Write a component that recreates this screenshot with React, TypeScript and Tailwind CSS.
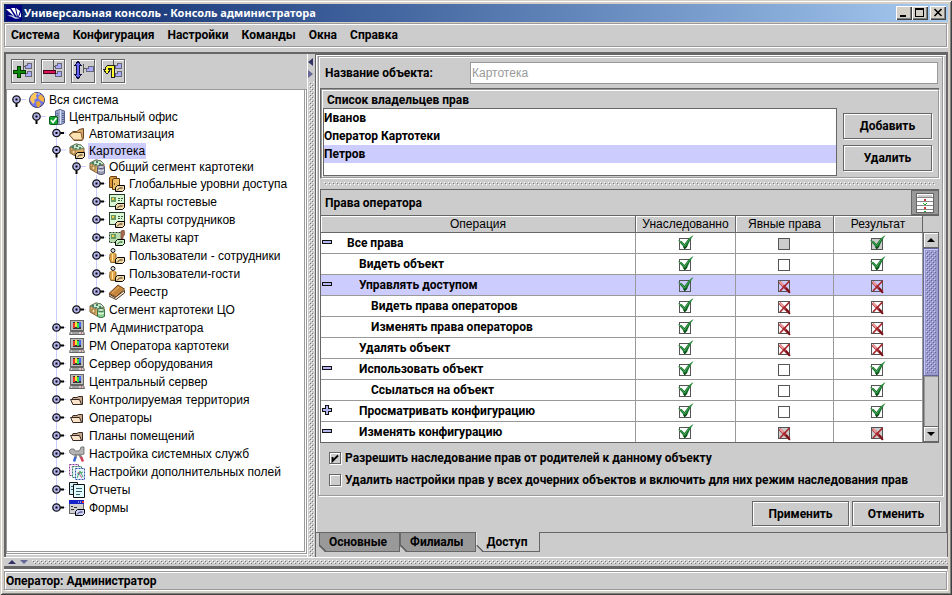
import { useId, useState, type ReactNode } from "react";

const etched = "border border-[#999] shadow-[inset_1px_1px_0_#fff,1px_1px_0_#fff]";
const raised = "border border-[#666] shadow-[inset_1px_1px_0_#fff,1px_1px_0_#fff] bg-[#ccc]";

type IconName =
  | "globe" | "office" | "folder" | "catalog" | "segment" | "levels" | "card"
  | "template" | "user" | "book" | "segmentGreen" | "computer" | "smallFolder"
  | "tools" | "fields" | "reports" | "forms";

type Handle = "open" | "closed";

const tree: { level: number; icon: IconName; label: string; handle: Handle; height: string; last?: boolean; selected?: boolean }[] = [
  { level: 0, icon: "globe", label: "Вся система", handle: "open", height: "h-[18px]" },
  { level: 1, icon: "office", label: "Центральный офис", handle: "open", height: "h-4" },
  { level: 2, icon: "folder", label: "Автоматизация", handle: "closed", height: "h-[17px]" },
  { level: 2, icon: "catalog", label: "Картотека", handle: "open", height: "h-[17px]", selected: true },
  { level: 3, icon: "segment", label: "Общий сегмент картотеки", handle: "open", height: "h-4" },
  { level: 4, icon: "levels", label: "Глобальные уровни доступа", handle: "closed", height: "h-[18px]" },
  { level: 4, icon: "card", label: "Карты гостевые", handle: "closed", height: "h-[18px]" },
  { level: 4, icon: "card", label: "Карты сотрудников", handle: "closed", height: "h-[18px]" },
  { level: 4, icon: "template", label: "Макеты карт", handle: "closed", height: "h-[18px]" },
  { level: 4, icon: "user", label: "Пользователи - сотрудники", handle: "closed", height: "h-[18px]" },
  { level: 4, icon: "user", label: "Пользователи-гости", handle: "closed", height: "h-[18px]" },
  { level: 4, icon: "book", label: "Реестр", handle: "closed", height: "h-[18px]", last: true },
  { level: 3, icon: "segmentGreen", label: "Сегмент картотеки ЦО", handle: "closed", height: "h-[18px]", last: true },
  { level: 2, icon: "computer", label: "РМ Администратора", handle: "closed", height: "h-[18px]" },
  { level: 2, icon: "computer", label: "РМ Оператора картотеки", handle: "closed", height: "h-[18px]" },
  { level: 2, icon: "computer", label: "Сервер оборудования", handle: "closed", height: "h-[18px]" },
  { level: 2, icon: "computer", label: "Центральный сервер", handle: "closed", height: "h-[18px]" },
  { level: 2, icon: "smallFolder", label: "Контролируемая территория", handle: "closed", height: "h-[18px]" },
  { level: 2, icon: "smallFolder", label: "Операторы", handle: "closed", height: "h-[18px]" },
  { level: 2, icon: "smallFolder", label: "Планы помещений", handle: "closed", height: "h-[18px]" },
  { level: 2, icon: "tools", label: "Настройка системных служб", handle: "closed", height: "h-[18px]" },
  { level: 2, icon: "fields", label: "Настройки дополнительных полей", handle: "closed", height: "h-[18px]" },
  { level: 2, icon: "reports", label: "Отчеты", handle: "closed", height: "h-[18px]" },
  { level: 2, icon: "forms", label: "Формы", handle: "closed", height: "h-[18px]", last: true },
];

type Mark = "yes" | "yesGrey" | "no" | "noGrey" | "empty" | "grey";

const rights: { label: string; indent: string; toggle?: "minus" | "plus"; marks: [Mark, Mark, Mark]; selected?: boolean }[] = [
  { label: "Все права", indent: "pl-[26px]", toggle: "minus", marks: ["yes", "grey", "yesGrey"] },
  { label: "Видеть объект", indent: "pl-[38px]", marks: ["yes", "empty", "yes"] },
  { label: "Управлять доступом", indent: "pl-[38px]", toggle: "minus", marks: ["yes", "no", "no"], selected: true },
  { label: "Видеть права операторов", indent: "pl-[50px]", marks: ["yes", "no", "no"] },
  { label: "Изменять права операторов", indent: "pl-[50px]", marks: ["yes", "no", "no"] },
  { label: "Удалять объект", indent: "pl-[38px]", marks: ["yes", "no", "no"] },
  { label: "Использовать объект", indent: "pl-[38px]", toggle: "minus", marks: ["yes", "empty", "yes"] },
  { label: "Ссылаться на объект", indent: "pl-[50px]", marks: ["yes", "empty", "yes"] },
  { label: "Просматривать конфигурацию", indent: "pl-[38px]", toggle: "plus", marks: ["yes", "empty", "yes"] },
  { label: "Изменять конфигурацию", indent: "pl-[38px]", toggle: "minus", marks: ["yes", "noGrey", "noGrey"] },
];

const columns = ["Унаследованно", "Явные права", "Результат"];

function Bumps({ light = "#fff", dark = "#777" }: { light?: string; dark?: string }) {
  const id = useId();
  return (
    <svg className="block h-full w-full" shapeRendering="crispEdges" aria-hidden="true">
      <pattern id={id} width="4" height="4" patternUnits="userSpaceOnUse">
        <rect x="0" y="0" width="1" height="1" fill={light} />
        <rect x="1" y="1" width="1" height="1" fill={dark} />
        <rect x="2" y="2" width="1" height="1" fill={light} />
        <rect x="3" y="3" width="1" height="1" fill={dark} />
      </pattern>
      <rect width="100%" height="100%" fill={`url(#${id})`} />
    </svg>
  );
}

// Small folder laid over the lower right corner of many icons
function CornerFolder({ fill = "#f5d9a4" }: { fill?: string }) {
  return (
    <>
      <path d="M6.5 15.5V11.5L8.5 9.5H15.5V13.5L13.5 15.5Z" fill={fill} stroke="#000" />
      <path d="M8 14.5L10.5 12H13.5" fill="none" stroke="#000" strokeWidth=".8" />
    </>
  );
}

const openFolder = (
  <>
    <path d="M.5 8.5L4 5.5H8L10 3.5L14.5 2.5V12.5L13 14.5H5Z" fill="#d9a86c" stroke="#6b4420" />
    <path d="M.5 9L4 6.5H12L13.5 14H5Z" fill="#fde2b4" stroke="#8a6030" />
  </>
);

const cabinet = (
  <>
    <path d="M1 4L7 1L12 2L15 5V11L8 14L1 10Z" fill="#dcae63" stroke="#83613a" />
    <path d="M1 4L7 1L12 2L15 5L8 7Z" fill="#cde8c8" stroke="#667f66" />
    <path d="M3 3H5V5H3ZM7 2H9V4H7ZM10 4H12V6H10ZM6 5H8V6H6Z" fill="#497f68" />
    <path d="M3 7H6V11H3Z" fill="#f9dda4" stroke="#96713c" />
  </>
);

const icons: Record<IconName, ReactNode> = {
  globe: (
    <>
      <circle cx="8" cy="8" r="7.5" fill="#6f76ee" stroke="#444477" />
      <path d="M2 4L5 1H8L7 4L8 6L5 8L6 10L4 12L1 8Z" fill="#ffc85a" />
      <path d="M10 4L12 2.5L15 6L15 10L12 9L10 7L9 6Z" fill="#f5b33d" />
      <path d="M7 10L10 9L12 12L10 15L8 15Z" fill="#e9a732" />
      <path d="M8 1.5L11 1.5L10 3Z" fill="#dceaff" />
    </>
  ),
  office: (
    <>
      <path d="M6.5 2L11 .5L15.5 2V14L12 15.5H6.5Z" fill="#9aa3cc" stroke="#56608c" />
      <path d="M11.5 1V15" stroke="#dde3ff" />
      <path d="M8.5 4V13M14 4V13" stroke="#59648f" strokeDasharray="1 1" strokeWidth="2" />
      <rect x=".5" y="7.5" width="8" height="8" rx="1" fill="#17a535" stroke="#075b18" />
      <path d="M2 11L4 13.5L7.5 9" fill="none" stroke="#fff" strokeWidth="1.6" />
    </>
  ),
  folder: openFolder,
  catalog: (
    <>
      {cabinet}
      <CornerFolder />
    </>
  ),
  segment: (
    <>
      {cabinet}
      <path d="M8.5 8V14.5Q12 17 15.5 14.5V8Z" fill="#9b9db5" stroke="#555870" />
      <ellipse cx="12" cy="8" rx="3.5" ry="1.5" fill="#d4d5e5" stroke="#555870" />
      <path d="M9 11Q12 13 15 11" fill="none" stroke="#eee" />
    </>
  ),
  segmentGreen: (
    <>
      {cabinet}
      <path d="M8.5 8V14.5Q12 17 15.5 14.5V8Z" fill="#8fd197" stroke="#397044" />
      <ellipse cx="12" cy="8" rx="3.5" ry="1.5" fill="#d4f0d6" stroke="#397044" />
      <path d="M9 11Q12 13 15 11" fill="none" stroke="#efffed" />
    </>
  ),
  levels: (
    <>
      <path d="M.5 1.5L2 .5H7.5V11.5H.5Z" fill="#d99738" stroke="#68400e" />
      <path d="M3.5 3.5L5 2.5H10.5V13.5H3.5Z" fill="#efbf68" stroke="#5a390e" />
      <path d="M5 8H6" stroke="#000" />
      <CornerFolder />
    </>
  ),
  card: (
    <>
      <rect x=".5" y=".5" width="15" height="12" fill="#d9f7d4" stroke="#263b26" />
      <rect x="2" y="3" width="5" height="5" fill="#6a9960" />
      <rect x="3" y="4" width="2" height="2" fill="#ffd24d" />
      <path d="M9 4.5H14M9 6.5H13" stroke="#395e39" strokeDasharray="2 1" />
      <CornerFolder />
    </>
  ),
  template: (
    <>
      <rect x=".5" y="2.5" width="13" height="10" fill="#b9dcae" stroke="#263b26" strokeDasharray="2 1" />
      <rect x="2" y="4" width="5" height="5" fill="#6a9960" />
      <rect x="3" y="5" width="2" height="2" fill="#ffd24d" />
      <path d="M12 1L15 0L16 4L14 7V10H12V6Z" fill="#a86b53" stroke="#6a3b2a" strokeWidth=".6" />
      <CornerFolder fill="#c9f5c3" />
    </>
  ),
  user: (
    <>
      <circle cx="4" cy="2.5" r="2" fill="#ddd" stroke="#111" />
      <path d="M1 5H7V14.5H1Z" fill="#dfa64c" />
      <path d="M1 6L.5 11L2 14.5H6L7 11V6" fill="none" stroke="#8e6528" />
      <path d="M3.5 6V13" stroke="#ffe0a0" />
      <CornerFolder />
    </>
  ),
  book: (
    <>
      <path d="M0 10L6 13.5L15.5 6.5V9L7 15.5L0 12Z" fill="#f5eee0" stroke="#4c361f" />
      <path d="M0 9.5L9 1L15.5 5L7 13Z" fill="#c5853c" stroke="#6c431b" />
      <path d="M3 9L10 3" stroke="#e9b36a" />
    </>
  ),
  computer: (
    <>
      <rect x="1.5" y=".5" width="13" height="10" fill="#bbb" stroke="#666" />
      <rect x="4" y="2" width="8" height="7" fill="#333" />
      <path d="M4 3H6V8H4Z" fill="#e33" />
      <path d="M6 2H8V7H6Z" fill="#fd3" />
      <path d="M8 3H10V8H8Z" fill="#3d5" />
      <path d="M10 2H12V7H10Z" fill="#46f" />
      <path d="M1.5 11.5H14.5L15.5 14.5H.5Z" fill="#ccc" stroke="#666" />
      <path d="M3 13H10" stroke="#777" />
      <path d="M12 13H13" stroke="#c22" />
    </>
  ),
  smallFolder: (
    <>
      <path d="M2.5 8L4 5.5H8L9.5 4.5H13.5V12.5H4Z" fill="#c7a98c" stroke="#382a22" />
      <path d="M1.5 7.5H10.5L12.5 12.5H4Z" fill="#fbe4ca" stroke="#382a22" />
    </>
  ),
  tools: (
    <>
      <path d="M0 5L2 3H5L6 5H9L11 4L12 1H15V8L12 9H4L1 7Z" fill="#b4b4b4" stroke="#666" strokeWidth=".8" />
      <path d="M7 8L6.5 12M10 8L12.5 12" stroke="#888" strokeWidth="2.4" />
      <path d="M6.5 11L5 15.5" stroke="#3565d4" strokeWidth="2.4" />
      <path d="M12 11L14 15.5" stroke="#d43a50" strokeWidth="2.4" />
    </>
  ),
  fields: (
    <>
      <path d="M.5 .5H9.5V11.5H.5Z" fill="#f6e8f8" stroke="#8a3f92" strokeDasharray="2 1" />
      <path d="M3.5 2.5H12.5V13.5H3.5Z" fill="#e5f4ef" stroke="#307868" strokeDasharray="2 1" />
      <path d="M6.5 4.5H15.5V15.5H6.5Z" fill="#eaf5ff" stroke="#3454b0" strokeDasharray="2 1" />
      <path d="M8 14L11 7L14 13M8 10L14 8" fill="none" stroke="#43a866" />
      <path d="M9 8L13 14" stroke="#cf589e" />
    </>
  ),
  reports: (
    <>
      <path d="M.5 .5H8.5V12.5H.5Z" fill="#d7f3f8" stroke="#111" />
      <path d="M4.5 2.5H15.5V15.5H4.5Z" fill="#e2fbff" stroke="#111" />
      <path d="M7 6.5H13M7 9.5H13M7 12.5H11" stroke="#345f68" />
      <path d="M2 4.5H4M2 7.5H4" stroke="#345f68" />
    </>
  ),
  forms: (
    <>
      <rect x=".5" y=".5" width="14" height="13" fill="#d0d0d0" stroke="#666" />
      <rect x="0" y="0" width="15" height="4" fill="#1822c9" />
      <path d="M9 2H10M11 2H12" stroke="#fff" />
      <path d="M13 1H15V3H13Z" fill="#ee3b2b" />
      <path d="M2 6.5H4M5 7.5H8M2 9.5H5" stroke="#333" />
      <CornerFolder fill="#cfd1ff" />
    </>
  ),
};

function TreeHandle({ handle, level, last }: { handle: Handle; level: number; last?: boolean }) {
  return (
    <svg className="h-full w-5 shrink-0 overflow-visible" aria-hidden="true">
      {level > 1 && <line x1="9.5" x2="9.5" y1="0" y2={last ? "50%" : "100%"} stroke="#ccf" />}
      <svg x="5" y="50%" overflow="visible">
        <path d="M9 -.5H14" stroke="#ccf" />
        {handle === "open" ? (
          <path d="M4.5 3V7" stroke="#000" strokeWidth="2" />
        ) : (
          <path d="M8 -.5H12" stroke="#000" strokeWidth="2" />
        )}
        <circle cx="4.5" cy="-.5" r="3.7" fill="#b4b4ee" stroke="#111" strokeWidth="1.3" />
        <rect x="3.5" y="-1.5" width="2" height="2" fill="#000" />
      </svg>
    </svg>
  );
}

function Tree() {
  return (
    <ul role="tree" className="text-[12px] leading-4">
      {tree.map(({ level, icon, label, handle, height, last, selected }) => (
        <li key={label} role="treeitem" aria-level={level + 1} aria-selected={!!selected} className={`flex items-center ${height}`}>
          {Array.from({ length: level }, (_, i) => (
            <svg key={i} className="h-full w-5 shrink-0" aria-hidden="true">
              {i > 1 && <line x1="9.5" x2="9.5" y1="0" y2="100%" stroke="#ccf" />}
            </svg>
          ))}
          <TreeHandle handle={handle} level={level} last={last} />
          <svg viewBox="0 0 16 16" className="mr-[3px] ml-0.5 size-4 shrink-0" aria-hidden="true">
            {icons[icon]}
          </svg>
          <span className={selected ? "bg-[#ccf] px-px" : "px-px"}>{label}</span>
        </li>
      ))}
    </ul>
  );
}

function TreeToolbar() {
  const branch = (
    <>
      <path d="M11.5 0V14M11.5 6.5H14M11.5 13.5H14" fill="none" stroke="#555" />
      <path d="M13.5 5.5H15.5V3.5H19.5V8.5H13.5Z" fill="#aaf" stroke="#667" />
      <path d="M13.5 13.5H15.5V11.5H19.5V16.5H13.5Z" fill="#aaf" stroke="#667" />
    </>
  );
  const buttons: { label: string; drawing: ReactNode }[] = [
    {
      label: "Добавить",
      drawing: (
        <>
          {branch}
          <path d="M5.5 6.5H8.5V10.5H13.5V13.5H8.5V17.5H5.5V13.5H1.5V10.5H5.5Z" fill="#0a8a0a" stroke="#003c00" />
        </>
      ),
    },
    {
      label: "Удалить",
      drawing: (
        <>
          {branch}
          <path d="M1.5 10.5H13.5V13.5H1.5Z" fill="#e0105c" stroke="#400018" />
        </>
      ),
    },
    {
      label: "Переместить",
      drawing: (
        <>
          <path d="M6 1.5L9.5 5.5H7.5V14.5H9.5L6 18.5L2.5 14.5H4.5V5.5H2.5Z" fill="#66f" stroke="#114" />
          <path d="M11.5 4V13M11.5 8.5H14" fill="none" stroke="#555" />
          <path d="M14.5 8.5H16.5V6.5H21.5V11.5H14.5Z" fill="#aaf" stroke="#667" />
        </>
      ),
    },
    {
      label: "Вернуть",
      drawing: (
        <>
          {branch}
          <path d="M10.5 18V6.5H6.5L5 8.5V11" fill="none" stroke="#222" strokeWidth="4" />
          <path d="M1.5 9.5H8.5L5 14Z" fill="#ff3" stroke="#222" />
          <path d="M10.5 17V6.5H6.5L5 8.5V11" fill="none" stroke="#ff3" strokeWidth="2" />
        </>
      ),
    },
  ];
  return (
    <div className="flex h-[35px] gap-1.5 px-[5px] py-[5px]">
      {buttons.map(({ label, drawing }) => (
        <button key={label} type="button" aria-label={label} className={`size-6 ${raised}`}>
          <svg viewBox="0 0 22 22" className="block size-[22px]" shapeRendering="crispEdges">{drawing}</svg>
        </button>
      ))}
    </div>
  );
}

function MarkBox({ mark, label }: { mark: Mark; label: string }) {
  const checked = mark === "yes" || mark === "yesGrey";
  const denied = mark === "no" || mark === "noGrey";
  const grey = mark === "grey" || mark === "yesGrey" || mark === "noGrey";
  return (
    <span className="mx-auto grid size-4">
      <input type="checkbox" aria-label={label} defaultChecked={checked} className="col-start-1 row-start-1 size-4 appearance-none" />
      <svg viewBox="0 0 16 16" className="pointer-events-none col-start-1 row-start-1 size-4 overflow-visible" aria-hidden="true">
        <rect x="1.5" y="3.5" width="11" height="11" fill={grey ? "#ccc" : "none"} stroke="#555" shapeRendering="crispEdges" />
        {checked && (
          <>
            <path d="M0 5.5L3.5 6L6.5 9L10.5 3.5L15.5 0L12 5.5L9 12L6.5 14.5L4.5 10.5Z" fill="#14702a" />
            <path d="M1 6.3L3.5 7L6.5 11L11 4.5L14 1.5" fill="none" stroke="#4fae5c" strokeWidth=".9" />
            <path d="M5.8 12L6.8 13.6L9 11" fill="none" stroke="#0a3c12" />
          </>
        )}
        {denied && (
          <>
            <path d="M2.5 5L12.5 15" stroke="#a83038" strokeWidth="2.6" />
            <path d="M12.5 4L3 14" stroke="#a8272c" strokeWidth="1.8" />
            <path d="M3 5L6.5 8.5" stroke="#ef9c9c" strokeWidth="2" />
            <path d="M9 11L13 16" stroke="#6e1015" strokeWidth="1.4" />
          </>
        )}
      </svg>
    </span>
  );
}

function Toggle({ kind }: { kind: "minus" | "plus" }) {
  return (
    <button type="button" aria-label={kind === "minus" ? "Свернуть" : "Развернуть"} className="absolute top-0.5 left-px size-[10px]">
      <svg viewBox="0 0 10 10" className="block size-[10px]" shapeRendering="crispEdges">
        {kind === "minus" ? (
          <path d="M.5 3.5H9.5V6.5H.5Z" fill="#b4b4ee" stroke="#111" />
        ) : (
          <path d="M3.5 .5H6.5V3.5H9.5V6.5H6.5V9.5H3.5V6.5H.5V3.5H3.5Z" fill="#b4b4ee" stroke="#111" />
        )}
      </svg>
    </button>
  );
}

function RightsTable() {
  return (
    <div className="flex min-h-0 flex-1 border-t border-b border-l border-[#666]">
      <div className="min-w-0 flex-1 overflow-hidden bg-white">
        <table className="w-full table-fixed border-separate border-spacing-0">
          <thead>
            <tr className="h-[17px] bg-[#ccc] font-['Liberation_Sans'] text-[12px] leading-4 font-normal">
              <th className="border-r border-b border-[#666] p-0 font-normal shadow-[inset_1px_1px_0_#fff]">Операция</th>
              {columns.map((column, i) => (
                <th
                  key={column}
                  className={`border-r border-b border-[#666] p-0 font-normal shadow-[inset_1px_1px_0_#fff] ${["w-[100px]", "w-[98px]", "w-[89px]"][i]}`}
                >
                  {column}
                </th>
              ))}
            </tr>
          </thead>
          <tbody>
            {rights.map(({ label, indent, toggle, marks, selected }) => (
              <tr key={label} className={`h-[21px] ${selected ? "bg-[#ccf]" : ""}`}>
                <td className="border-r border-b border-[#999] p-0">
                  <div className={`relative leading-4 ${indent}`}>
                    {toggle && <Toggle kind={toggle} />}
                    {label}
                  </div>
                </td>
                {marks.map((mark, i) => (
                  <td key={columns[i]} className="border-r border-b border-[#999] p-0">
                    <MarkBox mark={mark} label={`${label}: ${columns[i]}`} />
                  </td>
                ))}
              </tr>
            ))}
          </tbody>
        </table>
      </div>
      <div className="flex w-4 flex-col pt-4">
        <button type="button" aria-label="Вверх" className="flex h-4 shrink-0 items-center justify-center border border-[#666] shadow-[inset_1px_1px_0_#fff]">
          <svg viewBox="0 0 8 4" className="h-1 w-2"><path d="M4 0L8 4H0Z" /></svg>
        </button>
        <div className="h-32 border border-[#669] bg-[#99c] p-0.5 shadow-[inset_1px_1px_0_#ccf]">
          <Bumps light="#ccf" dark="#669" />
        </div>
        <div className="flex-1 border-x border-[#666] shadow-[inset_1px_1px_0_#999]" />
        <button type="button" aria-label="Вниз" className="flex h-4 shrink-0 items-center justify-center border border-[#666] shadow-[inset_1px_1px_0_#fff]">
          <svg viewBox="0 0 8 4" className="h-1 w-2"><path d="M4 4L8 0H0Z" /></svg>
        </button>
      </div>
    </div>
  );
}

function Option({ label, initial }: { label: string; initial: boolean }) {
  const [checked, setChecked] = useState(initial);
  return (
    <label className="flex h-[22px] items-center gap-1 whitespace-nowrap">
      <span className="grid">
        <input
          type="checkbox"
          checked={checked}
          onChange={() => setChecked(!checked)}
          className={`col-start-1 row-start-1 size-3 appearance-none ${raised}`}
        />
        {checked && (
          <svg viewBox="0 0 12 12" className="pointer-events-none col-start-1 row-start-1 size-3">
            <path d="M3.5 5V9L9 3.5" fill="none" stroke="#000" strokeWidth="1.8" />
          </svg>
        )}
      </span>
      {label}
    </label>
  );
}

function PushButton({ children, className }: { children: ReactNode; className: string }) {
  return <button type="button" className={`${raised} ${className}`}>{children}</button>;
}

function Tab({ label, active }: { label: string; active?: boolean }) {
  return (
    <button
      type="button"
      role="tab"
      aria-selected={!!active}
      className={`relative h-5 border-r border-b border-[#666] pr-3 pl-[9px] [clip-path:polygon(0_0,100%_0,100%_100%,6px_100%,0_calc(100%-6px))] ${
        active ? "border-l border-l-white bg-[#ccc]" : "border-t border-l bg-[#999]"
      }`}
    >
      {label}
      <svg viewBox="0 0 7 7" className="absolute -bottom-px -left-px size-[7px]" shapeRendering="crispEdges">
        <path d="M0 0L7 7" stroke="#666" strokeWidth="1.5" />
      </svg>
    </button>
  );
}

function ObjectPanel() {
  return (
    <div className="flex min-w-0 flex-1 flex-col border-t border-l border-[#666]">
      <div className="flex min-h-0 flex-1 flex-col border-r border-b border-[#666] pt-px pr-[3px] pl-0.5 shadow-[inset_1px_1px_0_#fff]">
        <div className={`flex min-h-0 flex-1 flex-col pr-[3px] pl-px ${etched}`}>
          <div className="flex h-[31px] items-center pr-px pl-[5px]">
            <label htmlFor="object-name" className="w-[145px]">Название объекта:</label>
            <input
              id="object-name"
              disabled
              defaultValue="Картотека"
              className="h-[22px] min-w-0 flex-1 border border-[#999] bg-white px-px font-['Liberation_Sans'] text-[12px] font-normal text-[#999]"
            />
          </div>

          <div className="border-t border-l border-[#666]">
            <div className={`flex gap-1.5 pr-1.5 pb-px pl-px ${etched}`}>
              <div className="min-w-0 flex-1">
                <h2 className="h-[18px] px-1 leading-5">Список владельцев прав</h2>
                <ul role="listbox" aria-label="Список владельцев прав" className="h-[68px] border border-[#666] bg-white leading-[18px]">
                  <li role="option" aria-selected="false">Иванов</li>
                  <li role="option" aria-selected="false">Оператор Картотеки</li>
                  <li role="option" aria-selected="true" className="bg-[#ccf]">Петров</li>
                </ul>
              </div>
              <div className="flex w-[89px] flex-col gap-1.5 pt-[23px]">
                <PushButton className="h-[26px]">Добавить</PushButton>
                <PushButton className="h-[26px]">Удалить</PushButton>
              </div>
            </div>
          </div>

          <div className="h-[11px] shrink-0 p-1">
            <Bumps />
          </div>

          <div className="flex h-[26px] shrink-0 items-center border-t border-l border-[#666] pl-1">
            <h2 className="flex-1">Права оператора</h2>
            <button type="button" aria-label="Вид таблицы" className="flex h-[25px] w-7 items-center justify-center border border-[#666] bg-[#999]">
              <svg viewBox="0 0 18 20" className="h-5 w-[18px]" shapeRendering="crispEdges">
                <rect x=".5" y=".5" width="17" height="19" fill="#fff" stroke="#666" />
                <rect x="2" y="2" width="14" height="2" fill="#ccc" />
                <path d="M1 4.5H17M1 8.5H17M1 12.5H17M1 16.5H17" stroke="#888" />
                <path d="M8 6H10V8H8ZM8 14H10V16H8Z" fill="#c33" />
                <path d="M7 10H8V11H10V10H11V11H10V12H8ZM7 18H8V19H10V18H11" fill="#2a2" />
              </svg>
            </button>
          </div>
          <RightsTable />
          <div className="shrink-0 px-[9px] py-1">
            <Option label="Разрешить наследование прав от родителей к данному объекту" initial />
            <Option label="Удалить настройки прав у всех дочерних объектов и включить для них режим наследования прав" initial={false} />
          </div>
        </div>
        <div className="flex shrink-0 justify-end gap-[3px] pt-[5px] pr-[3px] pb-1.5">
          <PushButton className="h-[25px] w-[97px]">Применить</PushButton>
          <PushButton className="h-[25px] w-[88px]">Отменить</PushButton>
        </div>
      </div>
      <div role="tablist" className="relative -mt-px flex h-[25px] shrink-0 items-start pl-[3px]">
        <Tab label="Основные" />
        <Tab label="Филиалы" />
        <Tab label="Доступ" active />
      </div>
    </div>
  );
}

function TitleBar() {
  const button = "flex h-3.5 w-4 items-center justify-center bg-[#d4d0c8] shadow-[inset_1px_1px_0_#fff,inset_-1px_-1px_0_#404040,inset_-2px_-2px_0_#808080]";
  return (
    <header className="flex h-[18px] shrink-0 items-center bg-linear-to-r from-[#0a246a] to-[#a6caf0] px-0.5">
      <svg viewBox="0 0 16 16" className="mr-0.5 size-4">
        <path d="M0 0H16V16H0Z" fill="#000080" />
        <path d="M0 4H4L9 12L2 6ZM5 3H9L11 12ZM10 3L14 6L12 12ZM15 7V12H13Z" fill="#fff" />
        <path d="M1 11Q6 9 9 12Q12 13 15 12.5Q10 15 7 12.5Q5 10.5 1 11Z" fill="#cde" />
      </svg>
      <h1 className="flex-1 font-['Noto_Sans'] text-[11px] leading-4 font-bold text-white">
        Универсальная консоль - Консоль администратора
      </h1>
      <button type="button" aria-label="Свернуть окно" className={button}>
        <svg viewBox="0 0 16 14" className="h-3.5 w-4"><path d="M4 9H10V11H4Z" /></svg>
      </button>
      <button type="button" aria-label="Развернуть окно" className={button}>
        <svg viewBox="0 0 16 14" className="h-3.5 w-4"><path d="M3 2H12V11H3ZM4 4V10H11V4Z" fillRule="evenodd" /></svg>
      </button>
      <button type="button" aria-label="Закрыть окно" className={`ml-0.5 ${button}`}>
        <svg viewBox="0 0 16 14" className="h-3.5 w-4"><path d="M4.5 3L11.5 10M11.5 3L4.5 10" stroke="#000" strokeWidth="1.6" /></svg>
      </button>
    </header>
  );
}

export default function App() {
  return (
    <div className="flex h-screen flex-col bg-[#d4d0c8] p-1 font-['Liberation_Sans',sans-serif] text-[12px] leading-4 text-black shadow-[inset_1px_1px_0_#d4d0c8,inset_-1px_-1px_0_#404040,inset_2px_2px_0_#fff,inset_-2px_-2px_0_#808080]">
      <TitleBar />
      <div className="mt-px flex min-h-0 flex-1 flex-col bg-[#ccc] font-['Roboto',sans-serif] font-bold">
        <nav className={`mr-px flex h-6 shrink-0 items-center gap-[13px] px-1.5 ${etched}`}>
          {["Система", "Конфигурация", "Настройки", "Команды", "Окна", "Справка"].map((item) => (
            <button key={item} type="button">{item}</button>
          ))}
        </nav>

        <main className="mt-[5px] flex min-h-0 flex-1 border-t-2 border-r border-[#666]">
          <section className="flex w-[303px] shrink-0 flex-col border-l-2 border-[#666]">
            <TreeToolbar />
            <div className="flex min-h-0 flex-1 border border-[#999] bg-white pr-px pb-px font-['Liberation_Sans'] font-normal">
              <div className="min-w-0 flex-1 overflow-hidden border-r border-b border-[#999] pt-px">
                <Tree />
              </div>
            </div>
            <div className="h-[3px] shrink-0 border-t border-white" />
          </section>
          <div className="flex w-2 shrink-0 flex-col border-l border-white pt-1">
            <svg viewBox="0 0 5 20" className="h-5 w-[5px] shrink-0">
              <path d="M5 0V8L0 4Z" fill="#336" />
              <path d="M0 12V20L5 16Z" fill="#669" />
            </svg>
            <div className="min-h-0 flex-1 px-px pt-1">
              <Bumps />
            </div>
          </div>
          <ObjectPanel />
        </main>

        <div className="flex h-[9px] shrink-0 items-center border-t border-white pl-1">
          <svg viewBox="0 0 20 4" className="h-1 w-5 shrink-0">
            <path d="M0 4H8L4 0Z" fill="#336" />
            <path d="M12 0H20L16 4Z" fill="#669" />
          </svg>
          <div className="h-1 min-w-0 flex-1 pl-1">
            <Bumps />
          </div>
        </div>

        <footer className="shrink-0 border-t-[3px] border-[#666] pr-px pb-px">
          <div className="border-t-2 border-white">
            <div className={`h-[19px] px-px leading-[18px] ${etched}`}>Оператор: Администратор</div>
          </div>
        </footer>
      </div>
    </div>
  );
}
